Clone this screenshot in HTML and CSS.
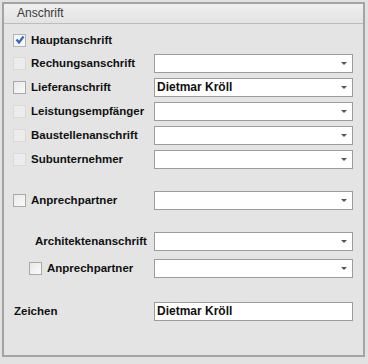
FILE: index.html
```html
<!DOCTYPE html>
<html>
<head>
<meta charset="UTF-8">
<title>Anschrift</title>
<link rel="stylesheet" href="styles.css">
</head>
<body>

<div class="panel">
	<div class="head">Anschrift</div>

	<div class="content">
		<div class="row first">
			<span class="chk on">
				<svg width="10" height="10" viewBox="0 0 10 10"><path d="M1.5 4.5 L4 7.5 L8.5 1.5" fill="none" stroke="#3466c0" stroke-width="2.2"/></svg>
			</span>
			<span class="lbl">Hauptanschrift</span>
		</div>

		<div class="row">
			<span class="chk faint"></span>
			<span class="lbl">Rechungsanschrift</span>
			<div class="fld combo"><span></span><i class="arr"></i></div>
		</div>

		<div class="row">
			<span class="chk"></span>
			<span class="lbl">Lieferanschrift</span>
			<div class="fld combo"><span>Dietmar Kröll</span><i class="arr"></i></div>
		</div>

		<div class="row">
			<span class="chk faint"></span>
			<span class="lbl">Leistungsempfänger</span>
			<div class="fld combo"><span></span><i class="arr"></i></div>
		</div>

		<div class="row">
			<span class="chk faint"></span>
			<span class="lbl">Baustellenanschrift</span>
			<div class="fld combo"><span></span><i class="arr"></i></div>
		</div>

		<div class="row">
			<span class="chk faint"></span>
			<span class="lbl">Subunternehmer</span>
			<div class="fld combo"><span></span><i class="arr"></i></div>
		</div>

		<div class="row gap">
			<span class="chk"></span>
			<span class="lbl">Anprechpartner</span>
			<div class="fld combo"><span></span><i class="arr"></i></div>
		</div>

		<div class="row gap">
			<span class="lbl indent">Architektenanschrift</span>
			<div class="fld combo"><span></span><i class="arr"></i></div>
		</div>

		<div class="row near">
			<span class="chk sub"></span>
			<span class="lbl">Anprechpartner</span>
			<div class="fld combo"><span></span><i class="arr"></i></div>
		</div>

		<div class="row gap2">
			<span class="lbl plain">Zeichen</span>
			<div class="fld"><span>Dietmar Kröll</span></div>
		</div>
	</div>
</div>

</body>
</html>
```

FILE: styles.css
```css
body
{
	margin: 0;
	background-color: #e2e2e2;
	font-family: "Liberation Sans", Arial, sans-serif;
	font-size: 12px;
	color: #111;
}

.panel
{
	margin: 2px 3px 3px 2px;
	height: 355px;
	box-sizing: border-box;
	border: 2px solid #a4a4a4;
	background-color: #e4e4e4;
}

.head
{
	height: 19px;
	line-height: 19px;
	padding-left: 13px;
	color: #3a3a3a;
	background: linear-gradient(#efefef, #e3e3e3);
	border-bottom: 1px solid #bdbdbd;
}

.content { padding: 5px 10px 0 6px; }

.row
{
	display: flex;
	align-items: center;
	height: 24px;
}
.row.first { height: 22px; }
.row.gap { margin-top: 17px; }
.row.gap2 { margin-top: 19px; }
.row.near { margin-top: 3px; }

.chk
{
	width: 11px;
	height: 11px;
	margin: 0 5px 0 3px;
	border: 1px solid #a9a9a9;
	background: linear-gradient(135deg, #e8e8e8, #fbfbfb);
	display: flex;
	align-items: center;
	justify-content: center;
	flex: none;
}
.chk.faint { border-color: #dadada; background: #ececec; }
.chk.on { border-color: #b4b4b4; background: #f6f6f6; }
.chk.sub { margin-left: 19px; }

.lbl
{
	font-weight: bold;
	font-size: 11.5px;
	flex: 1;
	min-width: 0;
	white-space: nowrap;
}
.lbl.indent { padding-left: 25px; }
.lbl.plain { padding-left: 4px; }

.fld
{
	flex: none;
	width: 199px;
	height: 19px;
	box-sizing: border-box;
	border: 1px solid #9c9c9c;
	background-color: #fff;
	display: flex;
	align-items: center;
	padding: 0 5px 0 2px;
	font-weight: bold;
}
.fld span { flex: 1; }

.arr
{
	width: 0;
	height: 0;
	border-left: 3px solid transparent;
	border-right: 3px solid transparent;
	border-top: 3px solid #555;
}
```
